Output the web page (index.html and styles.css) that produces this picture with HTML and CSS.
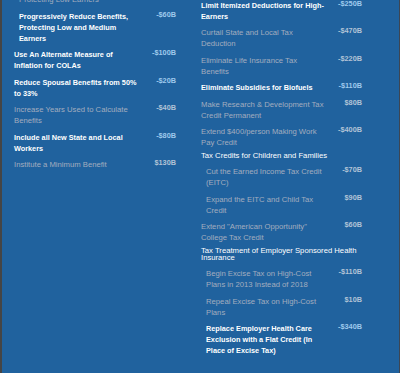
FILE: index.html
```html
<!DOCTYPE html>
<html>
<head>
<meta charset="utf-8">
<link rel="stylesheet" href="styles.css">
</head>
<body>
<div class="panel">
  <div class="col col-left">
    <div class="row sub dim"><div class="txt">Protecting Low Earners</div><div class="amt"></div></div>
    <div class="row sub strong"><div class="txt">Progressively Reduce Benefits, Protecting Low and Medium Earners</div><div class="amt">-$60B</div></div>
    <div class="row strong"><div class="txt">Use An Alternate Measure of Inflation for COLAs</div><div class="amt">-$100B</div></div>
    <div class="row strong"><div class="txt">Reduce Spousal Benefits from 50% to 33%</div><div class="amt">-$20B</div></div>
    <div class="row dim"><div class="txt">Increase Years Used to Calculate Benefits</div><div class="amt">-$40B</div></div>
    <div class="row strong"><div class="txt">Include all New State and Local Workers</div><div class="amt">-$80B</div></div>
    <div class="row dim"><div class="txt">Institute a Minimum Benefit</div><div class="amt">$130B</div></div>
  </div>
  <div class="col col-right">
    <div class="row strong"><div class="txt">Limit Itemized Deductions for High-Earners</div><div class="amt">-$250B</div></div>
    <div class="row dim"><div class="txt">Curtail State and Local Tax Deduction</div><div class="amt">-$470B</div></div>
    <div class="row dim"><div class="txt">Eliminate Life Insurance Tax Benefits</div><div class="amt">-$220B</div></div>
    <div class="row strong"><div class="txt">Eliminate Subsidies for Biofuels</div><div class="amt">-$110B</div></div>
    <div class="row dim"><div class="txt">Make Research &amp; Development Tax Credit Permanent</div><div class="amt">$80B</div></div>
    <div class="row dim"><div class="txt">Extend $400/person Making Work Pay Credit</div><div class="amt">-$400B</div></div>
    <div class="group">Tax Credits for Children and Families</div>
    <div class="row sub dim"><div class="txt">Cut the Earned Income Tax Credit (EITC)</div><div class="amt">-$70B</div></div>
    <div class="row sub dim"><div class="txt">Expand the EITC and Child Tax Credit</div><div class="amt">$90B</div></div>
    <div class="row dim"><div class="txt">Extend "American Opportunity" College Tax Credit</div><div class="amt">$60B</div></div>
    <div class="group">Tax Treatment of Employer Sponsored Health Insurance</div>
    <div class="row sub dim"><div class="txt">Begin Excise Tax on High-Cost Plans in 2013 Instead of 2018</div><div class="amt">-$110B</div></div>
    <div class="row sub dim"><div class="txt">Repeal Excise Tax on High-Cost Plans</div><div class="amt">$10B</div></div>
    <div class="row sub strong"><div class="txt">Replace Employer Health Care Exclusion with a Flat Credit (In Place of Excise Tax)</div><div class="amt">-$340B</div></div>
  </div>
</div>
</body>
</html>
```

FILE: styles.css
```css
html, body {
  margin: 0;
  padding: 0;
  background: #20629e;
}
.panel {
  box-sizing: border-box;
  width: 400px;
  height: 373px;
  overflow: hidden;
  background: #20629e;
  border-left: 2px solid #454545;
  border-right: 1px solid #3c4654;
  padding-left: 12px;
  display: flex;
  align-items: flex-start;
  gap: 25px;
  font-family: "Liberation Sans", Arial, sans-serif;
  font-size: 7.7px;
}
.col {
  display: flex;
  flex-direction: column;
  gap: 5.5px;
}
.col-left {
  width: 162px;
  margin-top: -6px;
}
.col-right {
  width: 161px;
  margin-top: -0.5px;
}
.row {
  display: grid;
  grid-template-columns: 1fr 36px;
  align-items: start;
}
.row.sub {
  padding-left: 5px;
}
.txt {
  line-height: 11px;
}
.amt {
  line-height: 7px;
  text-align: right;
  font-weight: bold;
  font-size: 7.3px;
  color: #9fc9ec;
}
.strong .txt {
  color: #ffffff;
  font-weight: bold;
  font-size: 7.3px;
}
.dim .txt {
  color: #a3adbf;
}
.dim .amt {
  color: #b2c2d6;
}
.group {
  color: #ffffff;
  line-height: 7px;
  margin-top: -1.5px;
  margin-bottom: 1.5px;
}
```
